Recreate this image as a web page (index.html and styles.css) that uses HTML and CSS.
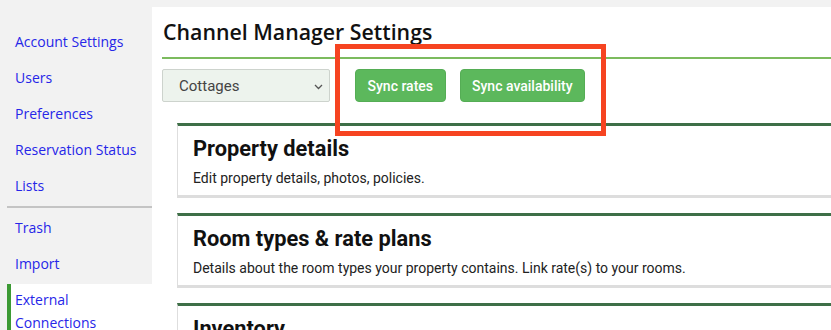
FILE: index.html
```html
<!DOCTYPE html>
<html lang="en">
<head>
    <meta charset="UTF-8">
    <meta name="viewport" content="width=device-width, initial-scale=1.0">
    <title>Channel Manager Settings</title>
    <link rel="stylesheet" href="styles.css">
</head>
<body>
    <div class="layout">
        <nav class="sidebar">
            <ul class="menu">
                <li><a href="#">Account Settings</a></li>
                <li><a href="#">Users</a></li>
                <li><a href="#">Preferences</a></li>
                <li><a href="#">Reservation Status</a></li>
                <li><a href="#">Lists</a></li>
            </ul>
            <ul class="menu menu-bottom">
                <li><a href="#">Trash</a></li>
                <li><a href="#">Import</a></li>
                <li class="active"><a href="#">External Connections</a></li>
            </ul>
        </nav>

        <main class="main">
            <h1>Channel Manager Settings</h1>

            <div class="toolbar">
                <div class="select-wrap">
                    <select class="select">
                        <option>Cottages</option>
                    </select>
                    <svg class="chevron" width="9" height="6" viewBox="0 0 9 6">
                        <path d="M1 1 L4.5 4.5 L8 1" fill="none" stroke="#555" stroke-width="1.3"/>
                    </svg>
                </div>
                <button class="button">Sync rates</button>
                <button class="button">Sync availability</button>
            </div>

            <div class="card">
                <h2>Property details</h2>
                <p>Edit property details, photos, policies.</p>
            </div>
            <div class="card">
                <h2>Room types &amp; rate plans</h2>
                <p>Details about the room types your property contains. Link rate(s) to your rooms.</p>
            </div>
            <div class="card">
                <h2>Inventory</h2>
                <p>Manage availability for your rooms.</p>
            </div>
        </main>
    </div>

    <!-- annotation around the sync buttons -->
    <div class="highlight"></div>
</body>
</html>
```

FILE: styles.css
```css
body {
    margin: 0;
    background: #f2f2f2;
    font-family: 'Roboto', 'Liberation Sans', sans-serif;
    height: 330px;
    overflow: hidden;
}
.layout {
    display: flex;
    align-items: flex-start;
}
.sidebar {
    width: 152px;
    flex-shrink: 0;
    padding-top: 24px;
}
.menu {
    list-style: none;
    margin: 0 0 0 7px;
    padding: 0;
}
.menu li {
    padding: 7px 0 7px 8px;
    line-height: 22px;
    font-family: 'Open Sans', sans-serif;
    font-size: 14px;
}
.menu a {
    color: #2626e8;
    text-decoration: none;
}
.menu-bottom {
    border-top: 2px solid #c4c4c4;
    margin-top: 2px;
    padding-top: 2px;
}
.menu .active {
    background: white;
    border-left: 4px solid #3c9a34;
    padding-left: 4px;
    margin-top: 2px;
    padding-top: 4px;
    line-height: 23px;
}
.main {
    flex: 1;
    background: white;
    margin-top: 7px;
    padding: 0 0 0 10px;
    height: 330px;
    overflow: hidden;
}
h1 {
    font-family: 'Open Sans', sans-serif;
    font-weight: 600;
    font-size: 21.3px;
    color: #111;
    margin: 0;
    padding: 10px 0 10px 1px;
    line-height: 30px;
    border-bottom: 2px solid #7cbb5e;
}
.toolbar {
    display: flex;
    align-items: center;
    margin-top: 10px;
    height: 33px;
}
.select-wrap {
    position: relative;
    margin-right: 25px;
}
.select {
    appearance: none;
    width: 168px;
    height: 33px;
    background: #edf3ed;
    border: 1px solid #cdd3cd;
    border-radius: 2px;
    padding: 1px 16px 0;
    font-family: 'Roboto', sans-serif;
    font-size: 15px;
    color: #444;
    display: block;
}
.chevron {
    position: absolute;
    right: 7px;
    top: 15px;
}
.button {
    background: #5cb85c;
    color: white;
    border: 1px solid #55ad55;
    border-radius: 4px;
    height: 33px;
    padding: 1px 11.5px 0;
    font-family: 'Roboto', sans-serif;
    font-size: 14px;
    font-weight: 500;
    margin-right: 14px;
}
.card {
    margin: 21px -30px 0 15px;
    background: white;
    border-top: 3px solid #3e6f47;
    border-left: 1px solid #dedede;
    box-shadow: 0 3px 0 #dddddd;
    padding: 10px 16px 8px 15px;
}
.card + .card {
    margin-top: 18px;
}
.card h2 {
    margin: 0;
    font-size: 21.8px;
    font-weight: 700;
    line-height: 26px;
    color: #111;
}
.card p {
    margin: 7px 0 0;
    font-size: 14px;
    line-height: 18px;
    color: #222;
}
.highlight {
    position: absolute;
    left: 335px;
    top: 44px;
    width: 261px;
    height: 82px;
    border: 5px solid #f64421;
}
```
